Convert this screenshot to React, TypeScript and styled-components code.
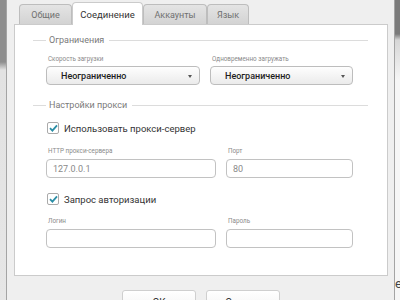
import styled, { createGlobalStyle } from 'styled-components';

const GlobalStyle = createGlobalStyle`
	html, body {
		margin: 0;
		width: 400px;
		height: 300px;
		overflow: hidden;
		font-family: Roboto, 'Liberation Sans', sans-serif;
	}
`;

const Screen = styled.div`
	display: flex;
	height: 300px;
	overflow: hidden;
	padding-left: 6px;
	background: linear-gradient(to bottom, #8e8e8e 0, #8e8e8e 62px, #e2e2e2 70px, #e6e6e6 100%);
`;

const Dialog = styled.div`
	width: 374px;
	flex-shrink: 0;
	display: flex;
	flex-direction: column;
	padding: 0 6px 0 7px;
	background: #efefef;
	border-left: 1px solid #a4a4a4;
	border-right: 1px solid #a4a4a4;
	& > * {
		flex-shrink: 0;
	}
`;

const Behind = styled.div`
	flex: 1;
	padding-top: 276px;
	background: linear-gradient(to bottom, #7b7b7b 0, #7b7b7b 34px, #d6d6d6 40px, #f6f6f6 80px);
	color: #444;
	font-size: 13px;
	white-space: nowrap;
	overflow: hidden;
`;

const TabBar = styled.div`
	display: flex;
	align-items: flex-end;
	height: 24px;
	padding-left: 5px;
`;

const Tab = styled.div<{ $active?: boolean; $w: number }>`
	position: relative;
	z-index: 1;
	box-sizing: border-box;
	width: ${(p) => p.$w}px;
	height: ${(p) => (p.$active ? 23 : 20)}px;
	margin-bottom: ${(p) => (p.$active ? -1 : 0)}px;
	display: flex;
	align-items: center;
	justify-content: center;
	border: 1px solid ${(p) => (p.$active ? '#cbcbcb' : '#bdbdbd')};
	border-bottom: none;
	border-radius: 4px 4px 0 0;
	background: ${(p) => (p.$active ? '#fff' : 'linear-gradient(#e4e4e4, #d3d3d3)')};
	color: ${(p) => (p.$active ? '#333' : '#707070')};
	font-size: ${(p) => (p.$active ? 9.5 : 9)}px;
`;

const Panel = styled.div`
	height: 250px;
	padding: 0 19px 0 18px;
	background: #fff;
	border: 1px solid #cbcbcb;
`;

const Legend = styled.div<{ $top: number }>`
	display: flex;
	align-items: center;
	gap: 3px;
	height: 12px;
	margin-top: ${(p) => p.$top}px;
	color: #7a7a7a;
	font-size: 9px;
	&::before {
		content: '';
		width: 13px;
		border-top: 1px solid #dcdcdc;
	}
	&::after {
		content: '';
		flex: 1;
		margin-left: 2px;
		border-top: 1px solid #dcdcdc;
	}
`;

const Group = styled.div`
	padding: 0 13px;
`;

const Columns = styled.div<{ $cols: string }>`
	display: grid;
	grid-template-columns: ${(p) => p.$cols};
	column-gap: 10px;
`;

const Field = styled.div<{ $top: number }>`
	display: flex;
	flex-direction: column;
	margin-top: ${(p) => p.$top}px;
`;

const Label = styled.div`
	height: 10px;
	line-height: 10px;
	padding-left: 2px;
	margin-bottom: 2px;
	color: #8a8a8a;
	font-size: 6.3px;
`;

const Select = styled.div`
	position: relative;
	box-sizing: border-box;
	height: 19px;
	display: flex;
	align-items: center;
	padding-left: 14px;
	background: linear-gradient(#fefefe, #ebebeb);
	border: 1px solid #bdbdbd;
	border-radius: 4px;
	color: #1e1e1e;
	font-size: 9px;
	font-weight: 500;
	&::after {
		content: '';
		position: absolute;
		right: 7px;
		top: 8px;
		border-left: 2.5px solid transparent;
		border-right: 2.5px solid transparent;
		border-top: 3px solid #555;
	}
`;

const Input = styled.div`
	box-sizing: border-box;
	height: 19px;
	margin-top: 1px;
	display: flex;
	align-items: center;
	padding-left: 6px;
	background: #fff;
	border: 1px solid #c2c2c2;
	border-radius: 4px;
	color: #8a8a8a;
	font-size: 9px;
`;

const CheckRow = styled.div<{ $top: number }>`
	display: flex;
	align-items: center;
	gap: 5px;
	height: 14px;
	margin-top: ${(p) => p.$top}px;
	padding-left: 1px;
	color: #333;
	font-size: 9.5px;
`;

const Box = styled.div`
	box-sizing: border-box;
	width: 12px;
	height: 12px;
	display: flex;
	align-items: center;
	justify-content: center;
	border: 1px solid #aaa;
	border-radius: 2px;
	background: #fff;
`;

const Footer = styled.div`
	display: flex;
	justify-content: center;
	gap: 10px;
	margin-top: 14px;
`;

const Button = styled.div`
	box-sizing: border-box;
	width: 74px;
	height: 24px;
	display: flex;
	align-items: center;
	justify-content: center;
	background: linear-gradient(#fff, #f1f1f1);
	border: 1px solid #cfcfcf;
	border-radius: 3px;
	color: #333;
	font-size: 10px;
`;

function Check({ label, top }: { label: string; top: number }) {
	return (
		<CheckRow $top={top}>
			<Box>
				<svg width='9' height='8' viewBox='0 0 9 8'>
					<path d='M1 4.2 L3.4 6.6 L8 1.4' fill='none' stroke='#2b8ea6' strokeWidth='1.8' />
				</svg>
			</Box>
			{label}
		</CheckRow>
	);
}

function App() {
	return (
		<Screen>
			<GlobalStyle />
			<Dialog>
				<TabBar>
					<Tab $w={53}>Общие</Tab>
					<Tab $w={71} $active>
						Соединение
					</Tab>
					<Tab $w={64}>Аккаунты</Tab>
					<Tab $w={42}>Язык</Tab>
				</TabBar>
				<Panel>
					<Legend $top={9}>Ограничения</Legend>
					<Group>
						<Columns $cols='154px 143px'>
							<Field $top={8}>
								<Label>Скорость загрузки</Label>
								<Select>Неограниченно</Select>
							</Field>
							<Field $top={8}>
								<Label>Одновременно загружать</Label>
								<Select>Неограниченно</Select>
							</Field>
						</Columns>
					</Group>

					<Legend $top={14}>Настройки прокси</Legend>
					<Group>
						<Check label='Использовать прокси-сервер' top={10} />
						<Columns $cols='170px 127px'>
							<Field $top={11}>
								<Label>HTTP прокси-сервера</Label>
								<Input>127.0.0.1</Input>
							</Field>
							<Field $top={11}>
								<Label>Порт</Label>
								<Input>80</Input>
							</Field>
						</Columns>
						<Check label='Запрос авторизации' top={14} />
						<Columns $cols='170px 127px'>
							<Field $top={10}>
								<Label>Логин</Label>
								<Input />
							</Field>
							<Field $top={10}>
								<Label>Пароль</Label>
								<Input />
							</Field>
						</Columns>
					</Group>
				</Panel>
				<Footer>
					<Button>OK</Button>
					<Button>Отмена</Button>
				</Footer>
			</Dialog>
			<Behind>ен</Behind>
		</Screen>
	);
}

export default App;
